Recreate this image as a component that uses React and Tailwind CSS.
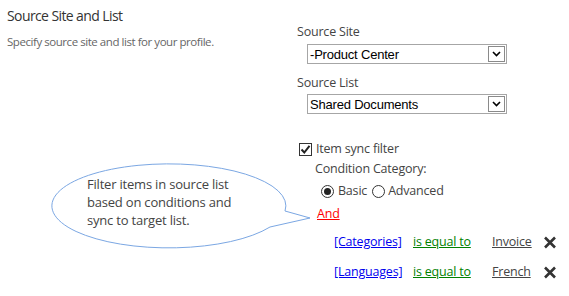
import React from "react";

function FakeSelect({ value }) {
  return (
    <div className="ml-[10px] flex h-[20px] w-[200px] items-center border border-[#a6a6a6] bg-white pl-[2px] pr-[1px] font-['Liberation_Sans',Arial,sans-serif] text-[13px] text-black">
      <span className="flex-1 leading-none">{value}</span>
      <span className="flex h-[16px] w-[17px] items-center justify-center border border-[#8a8a8a] bg-white">
        <svg width="9" height="6" viewBox="0 0 9 6">
          <path d="M1 1 L4.5 4.5 L8 1" fill="none" stroke="#000" strokeWidth="1.6" />
        </svg>
      </span>
    </div>
  );
}

function XIcon() {
  return (
    <svg width="14" height="13" viewBox="0 0 14 13">
      <path d="M2 1.5 L12 11.5 M12 1.5 L2 11.5" stroke="#333" strokeWidth="2.6" strokeLinecap="butt" />
    </svg>
  );
}

function CondRow({ field, value }) {
  return (
    <div className="flex h-[22px] items-center">
      <span className="w-[79px] text-[#0000ee] underline">{field}</span>
      <span className="w-[79px] text-[#008000] underline">is equal to</span>
      <span className="w-[51px] text-[#444] underline">{value}</span>
      <XIcon />
    </div>
  );
}

export default function App() {
  return (
    <div className="relative h-[296px] w-[569px] overflow-hidden bg-white font-['Open_Sans','Noto_Sans',sans-serif] text-[#444]">
      <div className="flex">
        <div className="w-[290px] pl-[7px] pt-[6px]">
          <div className="text-[14px] leading-[20px] tracking-[-0.6px] text-[#333]">Source Site and List</div>
          <div className="mt-[8px] text-[11.5px] leading-[16px] tracking-[-0.45px] text-[#666]">
            Specify source site and list for your profile.
          </div>
        </div>
        <div className="flex-1 pl-[7px] pt-[23px] text-[12.5px] leading-[18px] tracking-[-0.2px]">
          <div>Source Site</div>
          <div className="mt-[3px]">
            <FakeSelect value="-Product Center" />
          </div>
          <div className="mt-[10px]">Source List</div>
          <div className="mt-[2px]">
            <FakeSelect value="Shared Documents" />
          </div>
          <div className="mt-[26px] flex items-center">
            <span className="ml-[2px] mr-[4px] flex h-[13px] w-[13px] items-center justify-center border border-[#333] bg-white">
              <svg width="11" height="11" viewBox="0 0 11 11">
                <path d="M1.5 5.5 L4.3 8.5 L9.5 1.8" fill="none" stroke="#222" strokeWidth="2" />
              </svg>
            </span>
            <span>Item sync filter</span>
          </div>
          <div className="ml-[18px] mt-[2px]">Condition Category:</div>
          <div className="ml-[24px] mt-[4px] flex items-center">
            <span className="mr-[4px] flex h-[13px] w-[13px] items-center justify-center rounded-full border border-[#333] bg-white">
              <span className="h-[7px] w-[7px] rounded-full bg-[#222]" />
            </span>
            <span>Basic</span>
            <span className="ml-[5px] mr-[3px] h-[13px] w-[13px] rounded-full border border-[#333] bg-white" />
            <span>Advanced</span>
          </div>
          <div className="ml-[20px] mt-[5px] text-[#ff0000] underline">And</div>
          <div className="ml-[37px] mt-[8px]">
            <CondRow field="[Categories]" value="Invoice" />
            <div className="h-[8px]" />
            <CondRow field="[Languages]" value="French" />
          </div>
        </div>
      </div>

      <svg className="absolute left-0 top-0" width="569" height="296" viewBox="0 0 569 296">
        <path
          d="M285 211 A117 42 0 1 0 270 227 L310 218 Z"
          fill="white"
          stroke="#7ba7e3"
          strokeWidth="1"
        />
      </svg>
      <div className="absolute left-[87px] top-[175px] text-[13px] leading-[18px] tracking-[-0.2px] text-[#444]">
        Filter items in source list
        <br />
        based on conditions and
        <br />
        sync to target list.
      </div>
    </div>
  );
}
